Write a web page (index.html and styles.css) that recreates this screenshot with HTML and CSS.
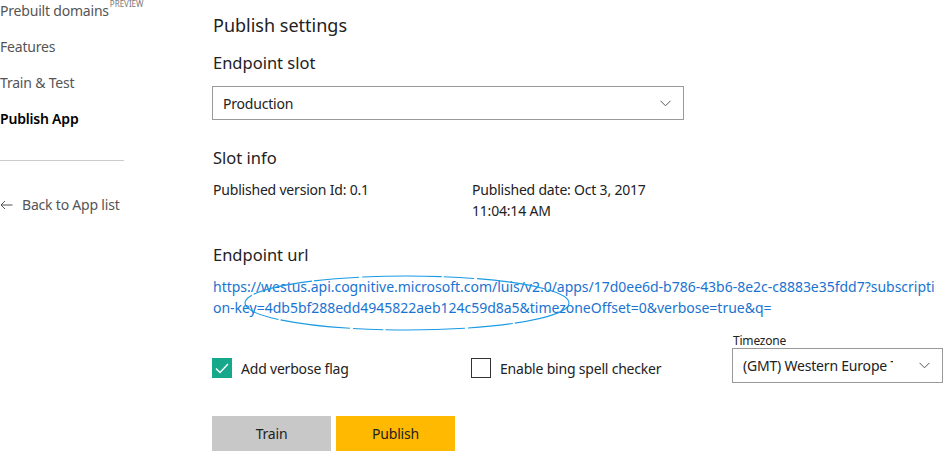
FILE: index.html
```html
<!DOCTYPE html>
<html>
<head>
<meta charset="utf-8">
<link rel="stylesheet" href="styles.css">
</head>
<body>
<div class="page">
  <nav class="sidebar">
    <div class="nav-item">Prebuilt domains<sup class="preview">PREVIEW</sup></div>
    <div class="nav-item">Features</div>
    <div class="nav-item">Train &amp; Test</div>
    <div class="nav-item active">Publish App</div>
    <hr class="divider">
    <div class="back">
      <svg class="back-arrow" width="13" height="10" viewBox="0 0 13 10"><path d="M12.5 5H1M5 1L1 5l4 4" fill="none" stroke="#555" stroke-width="1"/></svg>
      <span>Back to App list</span>
    </div>
  </nav>
  <main class="main">
    <h1 class="title">Publish settings</h1>
    <h2 class="subtitle">Endpoint slot</h2>
    <div class="select slot-select">
      <span>Production</span>
      <svg class="chev" width="11" height="7" viewBox="0 0 11 7"><path d="M0.5 0.8L5.5 5.8 10.5 0.8" fill="none" stroke="#555" stroke-width="1"/></svg>
    </div>
    <h2 class="subtitle slot-info">Slot info</h2>
    <div class="info-row">
      <div class="info-col">Published version Id: 0.1</div>
      <div class="info-col">Published date: Oct 3, 2017<br>11:04:14 AM</div>
    </div>
    <h2 class="subtitle endpoint">Endpoint url</h2>
    <div class="url-wrap">
      <div class="url">https://westus.api.cognitive.microsoft.com/luis/v2.0/apps/17d0ee6d-b786-43b6-8e2c-c8883e35fdd7?subscripti<br>on-key=4db5bf288edd4945822aeb124c59d8a5&amp;timezoneOffset=0&amp;verbose=true&amp;q=</div>
      <svg class="ellipse" width="340" height="62" viewBox="0 0 340 62"><ellipse cx="170" cy="31" rx="162" ry="27" fill="none" stroke="#1b9be3" stroke-width="1.1" stroke-dasharray="60 2 45 3 80 2 30 3 70 2 50 2"/></svg>
    </div>
    <div class="options">
      <label class="check">
        <span class="box checked"><svg width="14" height="11" viewBox="0 0 14 11"><path d="M1 5.5l4 4L13 1" fill="none" stroke="#fff" stroke-width="1.4"/></svg></span>
        <span>Add verbose flag</span>
      </label>
      <label class="check spell">
        <span class="box"></span>
        <span>Enable bing spell checker</span>
      </label>
      <div class="tz">
        <div class="tz-label">Timezone</div>
        <div class="select tz-select">
          <span class="tz-text">(GMT) Western Europe Time</span>
          <svg class="chev" width="11" height="7" viewBox="0 0 11 7"><path d="M0.5 0.8L5.5 5.8 10.5 0.8" fill="none" stroke="#555" stroke-width="1"/></svg>
        </div>
      </div>
    </div>
    <div class="buttons">
      <button class="btn train">Train</button>
      <button class="btn publish">Publish</button>
    </div>
  </main>
</div>
</body>
</html>
```

FILE: styles.css
```css
* { box-sizing: border-box; }
html, body { margin: 0; padding: 0; background: #fff; }
body {
  font-family: "Noto Sans", "Open Sans", sans-serif;
  color: #222;
  width: 949px;
  height: 460px;
  overflow: hidden;
}
.page {
  display: flex;
  gap: 89px;
}
.sidebar {
  width: 124px;
  flex: none;
  padding-top: 1px;
}
.nav-item {
  font-size: 14px;
  color: #555;
  height: 36px;
  line-height: 20px;
  white-space: nowrap;
  letter-spacing: -0.2px;
}
.nav-item.active {
  color: #000;
  font-weight: 600;
}
.preview {
  font-size: 8px;
  color: #777;
  vertical-align: top;
  position: relative;
  top: -7px;
  margin-left: 1px;
  letter-spacing: 0;
}
.divider {
  border: 0;
  border-top: 1px solid #ccc;
  margin: 15px 0 0;
  width: 124px;
}
.back {
  margin-top: 34px;
  display: flex;
  align-items: center;
  gap: 9px;
  font-size: 14px;
  color: #555;
  letter-spacing: -0.2px;
}
.main {
  flex: 1;
  padding-top: 12px;
}
.title {
  font-size: 18px;
  font-weight: 400;
  margin: 0;
  line-height: 26px;
  color: #222;
}
.subtitle {
  font-size: 16.5px;
  font-weight: 400;
  margin: 13px 0 0;
  line-height: 24px;
  color: #222;
}
.select {
  border: 1px solid #999;
  display: flex;
  align-items: center;
  justify-content: space-between;
  font-size: 14px;
  color: #222;
}
.slot-select {
  width: 472px;
  height: 34px;
  margin-top: 11px;
  margin-left: -1px;
  padding: 0 12px 0 10px;
  letter-spacing: -0.2px;
}
.slot-info { margin-top: 26px; }
.info-row {
  display: flex;
  margin-top: 9px;
  font-size: 14px;
  line-height: 21px;
  letter-spacing: -0.2px;
}
.info-col:first-child { width: 259px; }
.endpoint { margin-top: 22px; }
.url-wrap {
  position: relative;
  margin-top: 9px;
}
.url {
  font-size: 14px;
  line-height: 21px;
  color: #1a73d0;
  letter-spacing: -0.02px;
  white-space: nowrap;
}
.ellipse {
  position: absolute;
  left: 24px;
  top: -4px;
}
.options {
  display: flex;
  align-items: flex-start;
  margin-top: 16px;
}
.check {
  display: flex;
  align-items: center;
  gap: 9px;
  font-size: 14px;
  letter-spacing: -0.2px;
  margin-top: 24px;
  margin-left: -1px;
  width: 260px;
}
.check.spell { width: 261px; }
.box {
  width: 20px;
  height: 20px;
  border: 1px solid #333;
  display: flex;
  align-items: center;
  justify-content: center;
  flex: none;
}
.box.checked {
  background: #16a88b;
  border-color: #16a88b;
}
.tz-label {
  font-size: 12px;
  line-height: 14px;
  color: #222;
  margin-left: 1px;
  letter-spacing: -0.2px;
}
.tz-select {
  width: 211px;
  height: 35px;
  margin-top: 0;
  padding: 0 12px 0 10px;
}
.tz-text {
  width: 150px;
  overflow: hidden;
  white-space: nowrap;
  letter-spacing: -0.2px;
}
.buttons {
  display: flex;
  gap: 5px;
  margin-top: 33px;
  margin-left: -1px;
}
.btn {
  width: 119px;
  height: 35px;
  border: 0;
  font-family: inherit;
  font-size: 14px;
  color: #222;
  letter-spacing: -0.2px;
}
.train { background: #c8c8c8; }
.publish { background: #ffb900; }
```
